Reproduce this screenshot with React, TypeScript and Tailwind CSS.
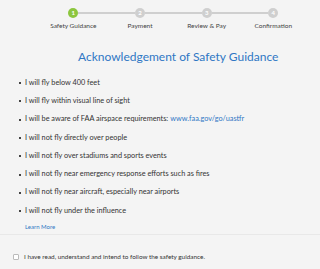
import React from 'react';

const steps = ['Safety Guidance', 'Payment', 'Review & Pay', 'Confirmation'];

const rules = [
  'I will fly below 400 feet',
  'I will fly within visual line of sight',
  'I will be aware of FAA airspace requirements:',
  'I will not fly directly over people',
  'I will not fly over stadiums and sports events',
  'I will not fly near emergency response efforts such as fires',
  'I will not fly near aircraft, especially near airports',
  'I will not fly under the influence',
];

function Stepper() {
  return (
    <div className="flex ml-[40px] pt-[8px]">
      {steps.map((label, i) => (
        <div key={label} className="w-[66.67px] flex flex-col items-center">
          <div className="flex items-center w-full h-[10px]">
            <div className={`flex-1 h-[1.5px] ${i === 0 ? 'bg-transparent' : 'bg-[#cfcfcf]'}`} />
            <div
              className={`w-[10px] h-[10px] rounded-full flex items-center justify-center text-white text-[6px] font-bold leading-none ${
                i === 0 ? 'bg-[#8cc63e]' : 'bg-[#cfcfcf]'
              }`}
            >
              {i + 1}
            </div>
            <div className={`flex-1 h-[1.5px] ${i === 3 ? 'bg-transparent' : 'bg-[#cfcfcf]'}`} />
          </div>
          <span className="mt-[4px] text-[6.5px] leading-[8px] text-[#444] whitespace-nowrap">{label}</span>
        </div>
      ))}
    </div>
  );
}

export default function App() {
  return (
    <div className="w-[320px] h-[269px] overflow-hidden bg-[#f4f4f4] font-['Lato',sans-serif]">
      <Stepper />

      <h1 className="pl-[78px] mt-[19px] text-[12px] leading-[16px] text-[#2f77c4] whitespace-nowrap">
        Acknowledgement of Safety Guidance
      </h1>

      <ul className="mt-[9px] pl-[19px]">
        {rules.map((rule, i) => (
          <li key={rule} className="flex items-center h-[18.3px] text-[7.3px] text-[#333] whitespace-nowrap">
            <span className="w-[2px] h-[2px] bg-[#444] mr-[4px]" />
            <span>{rule}</span>
            {i === 2 && <span className="ml-[2px] text-[#2f77c4]">www.faa.gov/go/uastfr</span>}
          </li>
        ))}
      </ul>

      <a className="block pl-[25px] mt-[3px] text-[6px] leading-[8px] text-[#2f77c4]">Learn More</a>

      <div className="mt-[3px] border-t border-[#e8e8e8]" />

      <label className="flex items-center pl-[13px] mt-[17px] text-[6.4px] text-[#333]">
        <span className="w-[6px] h-[6px] border border-[#bbb] rounded-[1px] bg-white mr-[5px]" />
        I have read, understand and intend to follow the safety guidance.
      </label>
    </div>
  );
}
